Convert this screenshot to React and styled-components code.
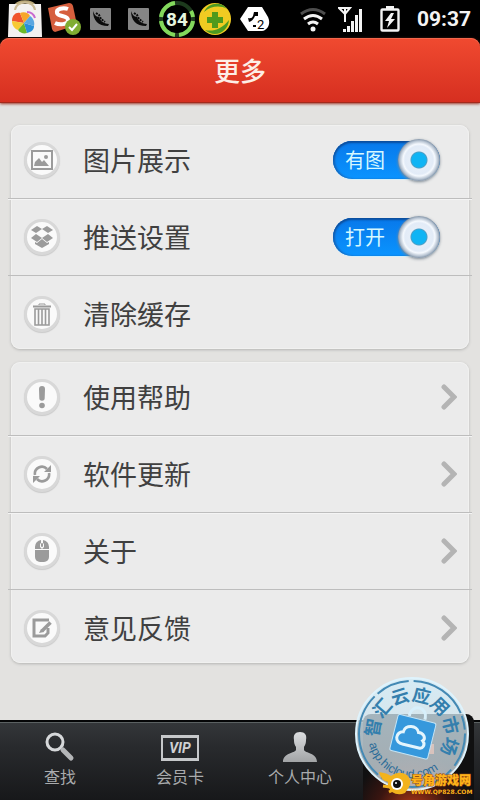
import styled, { createGlobalStyle, css } from "styled-components";
import React, { useState } from "react";

const GlobalStyle = createGlobalStyle`
  * {
    box-sizing: border-box;
  }

  body {
    margin: 0;
    background: #000;
    font-family: "Noto Sans CJK SC", sans-serif;
  }

  button {
    margin: 0;
    border: 0;
    background: none;
    font: inherit;
    color: inherit;
    cursor: pointer;
  }

  svg {
    display: block;
    flex: none;
  }
`;

const Page = styled.div`
  display: flex;
  flex-direction: column;
  min-height: 100vh;
  overflow: hidden;
  background: #e3e2e0;
`;

const Top = styled.div`
  background: #000;
`;

const StatusBar = styled.div`
  display: flex;
  justify-content: space-between;
  align-items: center;
  height: 38px;
  padding: 0 9px 0 7px;
`;

const StatusGroup = styled.div`
  display: flex;
  align-items: center;
  gap: ${(props) => props.$gap}px;
`;

const Clock = styled.time`
  font: 700 21px/24px Roboto, sans-serif;
  color: #f4f4f4;
`;

const Header = styled.header`
  display: flex;
  justify-content: center;
  align-items: center;
  height: 65px;
  border-bottom: 1px solid #a32a1c;
  border-radius: 9px 9px 0 0;
  background: linear-gradient(#f04a30, #d62f20);
  box-shadow: inset 0 1px #f2674c, 0 1px 3px #a0392c;
`;

const Title = styled.h1`
  margin: 0;
  font-size: 26px;
  font-weight: 500;
  line-height: 36px;
  color: #fdeee6;
`;

const Main = styled.main`
  flex: 1;
  display: flex;
  flex-direction: column;
  gap: 13px;
  padding: 22px 8px;
`;

const Card = styled.section`
  margin: 0 3px;
  border-radius: 9px;
  background: #ebebeb;
  box-shadow: inset 0 0 0 1px #f1f1f0, 0 1px 3px #b4b4b2;
`;

const rowStyles = css`
  display: flex;
  align-items: center;
  margin: 0 -3px;
  padding: 20px 15px 20px 16px;
  border-bottom: 1px solid #bdbdbd;
  text-align: left;

  &:not(:first-child) {
    box-shadow: inset 0 1px #f4f4f4;
  }

  &:first-child {
    padding-top: 17px;
  }

  &:last-child {
    border-bottom: 0;
    padding-bottom: 17px;
    box-shadow: none;
  }
`;

const Row = styled.div`
  ${rowStyles}
  padding-right: 32px;
`;

const RowButton = styled.button`
  ${rowStyles}
  width: calc(100% + 6px);

  && {
    border-bottom: 1px solid #bdbdbd;
  }

  &&:last-child {
    border-bottom: 0;
  }
`;

const IconCircle = styled.span`
  display: grid;
  place-items: center;
  flex: none;
  width: 36px;
  height: 36px;
  border: 3px solid #d8d8d8;
  border-radius: 50%;
  background: #fafafa;
  box-shadow: 0 1px 1px #c9c9c9;
`;

const RowText = styled.span`
  flex: 1;
  margin-left: 23px;
  font-size: 27px;
  line-height: 36px;
  color: #404040;
`;

const Toggle = styled.label`
  display: flex;
  justify-content: space-between;
  align-items: center;
  width: 107px;
  height: 38px;
  margin: -1px 0;
  padding-left: 12px;
  border-radius: 19px;
  background: linear-gradient(#0878ea, #0a94ff);
  box-shadow: inset 0 2px 2px #0b4d9c, inset 2px 0 2px #1668bd, 0 1px #d3effa;
  font-size: 20px;
  line-height: 28px;
  color: #d6f8ff;
  cursor: pointer;
`;

const Knob = styled.input`
  appearance: none;
  flex: none;
  width: 42px;
  height: 42px;
  margin: 0;
  border-radius: 50%;
  background: radial-gradient(
    circle,
    #10b4f4 7px,
    #4d9fc6 8px,
    #e6eef8 9px,
    #e2ebf7 14px,
    #f5f9fe 16px,
    #b9c5d3 19px,
    #8495a8 21px
  );
  box-shadow: 0 1px 3px #7d8994;
  cursor: pointer;
`;

const TabBar = styled.nav`
  position: relative;
  display: grid;
  grid-template-columns: repeat(4, 1fr);
  height: 80px;
  border-top: 2px solid #050607;
  background: linear-gradient(#34373a, #292b2e 30%, #17181a);
  box-shadow: inset 0 1px #5b6162;
`;

const Tab = styled.button`
  display: flex;
  flex-direction: column;
  align-items: center;
  gap: 2px;
  padding: 8px 0 0;
  font-size: 16px;
  line-height: 24px;
  color: #a9abad;
`;

const ActiveTab = styled(Tab)`
  margin: -8px 6px 0 3px;
  padding-top: 24px;
  border-radius: 8px 8px 0 0;
  background: radial-gradient(circle at 45% 115%, #c03c18, #3a1510 36px, #101011 60px);
`;

const Stamp = styled.svg`
  position: absolute;
  right: 10px;
  bottom: 8px;
`;

const SiteMark = styled.svg`
  position: absolute;
  right: 5px;
  bottom: 1px;
`;

const GREY = "#9b9b9b";

function ImageIcon() {
  return (
    <svg width="22" height="20" viewBox="0 0 22 20" fill={GREY}>
      <path d="M0 0h22v20H0zM2 2v16h18V2z" fillRule="evenodd" />
      <path d="M3 16l1-4 4-4 3 4 2-2 5 6z" />
      <circle cx="15" cy="7" r="2" />
    </svg>
  );
}

function BoxIcon() {
  return (
    <svg width="24" height="24" viewBox="0 0 24 24" fill={GREY}>
      <path d="M7 1l5 3-6 4-5-3zM17 1l-5 3 6 4 5-3z" />
      <path d="M6 9l6 4-5 4-6-4zM18 9l-6 4 5 4 6-4z" />
      <path d="M5 17l2 1 5-4 5 4 2-1v2l-7 4-7-4z" />
    </svg>
  );
}

function TrashIcon() {
  return (
    <svg width="18" height="23" viewBox="0 0 18 23" fill="none" stroke={GREY}>
      <path d="M0 3.500h18" strokeWidth="2" />
      <path d="M6 2V1h6v1" />
      <path d="M2 6h14v16H2zM5.500 6v16M9 6v16M12.500 6v16" strokeWidth="1.600" />
    </svg>
  );
}

function AlertIcon() {
  return (
    <svg width="8" height="24" viewBox="0 0 8 24" fill={GREY}>
      <path d="M1 4a3 3 0 0 1 6 0l-.3 9a2.600 2.600 0 0 1-5.400 0z" />
      <circle cx="4" cy="20.500" r="2.800" />
    </svg>
  );
}

function RefreshIcon() {
  return (
    <svg width="20" height="20" viewBox="0 0 20 20" fill="none" stroke={GREY} strokeWidth="2.600">
      <path d="M3 11A7 7 0 0 1 15 5M17 9A7 7 0 0 1 5 15" />
      <path d="M19 1v7h-7zM1 19v-7h7z" fill={GREY} stroke="none" />
    </svg>
  );
}

function MouseIcon() {
  return (
    <svg width="14" height="22" viewBox="0 0 14 22" fill={GREY}>
      <path d="M0 9V7a7 7 0 0 1 6-7v3a2 2 0 0 0-1 2v2l2 2zM14 9V7a7 7 0 0 0-6-7v3a2 2 0 0 1 1 2v2L7 9z" />
      <path d="M0 10h14v7a5 5 0 0 1-5 5H5a5 5 0 0 1-5-5z" />
      <rect x="6" y="3" width="2" height="4" rx="1" />
    </svg>
  );
}

function EditIcon() {
  return (
    <svg width="20" height="20" viewBox="0 0 20 20" fill="none" stroke={GREY}>
      <path d="M16 10v5l-3 3H2V2h15" strokeWidth="3" />
      <path d="M18.500 4.500L10 13" strokeWidth="3.600" />
      <path d="M7 15l2-4 3 3z" fill={GREY} stroke="none" />
    </svg>
  );
}

function Chevron() {
  return (
    <svg width="16" height="26" viewBox="0 0 16 26">
      <path
        d="M3 3l10 10L3 23"
        fill="none"
        stroke="#b4b4b4"
        strokeWidth="5"
        strokeLinecap="round"
      />
    </svg>
  );
}

function BagIcon() {
  return (
    <svg width="36" height="38" viewBox="0 0 36 38">
      <path d="M8 7c1-7 19-7 20 0" fill="none" stroke="#b9a878" strokeWidth="3" />
      <path d="M2 4h32l1 33H1z" fill="#f3f1f0" />
      <path d="M8 10c1-10 19-10 20 0" fill="none" stroke="#c9b993" strokeWidth="2" />
      <path d="M17 23L5 21c0-6 4-9 8-8z" fill="#f0542c" />
      <path d="M17 23l-4-10c4-2 9 0 10 3z" fill="#f7a62a" />
      <path d="M17 23L5 21c0 5 3 8 6 9z" fill="#f7c933" />
      <path d="M17 23l-6 7c2 3 6 4 9 3z" fill="#6cb928" />
      <path d="M17 23l3 10c4-1 7-3 7-7z" fill="#2a8fd8" />
      <path d="M17 23l10 3c1-4-1-8-4-10z" fill="#5aa6e0" />
      <path d="M20 12q6 0 8 6" fill="none" stroke="#c86ad0" strokeWidth="2" />
    </svg>
  );
}

function InputIcon() {
  return (
    <svg width="34" height="34" viewBox="0 0 34 34">
      <path d="M1 6L22 1q3 0 4 3l4 19-22 7q-2 0-3-3z" fill="#d65f3e" />
      <path
        d="M21 7c-5-2-12 0-11 4s11 2 11 7-9 5-13 3"
        fill="none"
        stroke="#fff"
        strokeWidth="4"
      />
      <circle cx="26" cy="25" r="8" fill="#80ad32" />
      <path d="M22 25l3 3 5-6" fill="none" stroke="#fff" strokeWidth="2" />
    </svg>
  );
}

function PodIcon() {
  return (
    <svg width="21" height="22" viewBox="0 0 21 22">
      <rect width="21" height="22" rx="1" fill="#858585" />
      <path d="M3 3c0 9 5 15 15 15l1-2c-6 0-9-4-10-7-3 0-5-3-6-6z" fill="#0b0b0b" />
      <path d="M6 5l3 2 2 4 4 3" fill="none" stroke="#0b0b0b" strokeWidth="2" strokeDasharray="2 1" />
    </svg>
  );
}

function GaugeIcon() {
  return (
    <svg width="38" height="38" viewBox="0 0 38 38">
      <circle cx="19" cy="19" r="16" fill="none" stroke="#1d3a1d" strokeWidth="4" />
      <path
        d="M35 21A16 16 0 0 1 21 35M17 35A16 16 0 0 1 3 21M3 17A16 16 0 0 1 17 3M33 11A16 16 0 0 1 35 17"
        fill="none"
        stroke="#83d85c"
        strokeWidth="4"
      />
      <text
        x="19"
        y="26"
        textAnchor="middle"
        fontFamily="Roboto, sans-serif"
        fontSize="19"
        fontWeight="700"
        fill="#e6f6df"
      >
        84
      </text>
    </svg>
  );
}

function ShieldIcon() {
  return (
    <svg width="32" height="34" viewBox="0 0 32 34">
      <circle cx="16" cy="17" r="16" fill="#f0cb22" />
      <path d="M5 10C9 0 23-1 28 7c-7-4-16-3-23 3zM6 28c8 2 17-1 24-10-1 12-14 19-24 10z" fill="#4c9a22" />
      <path d="M13 10h6v5h5v6h-5v5h-6v-5H8v-6h5z" fill="#4f9a1c" />
    </svg>
  );
}

function PlugIcon() {
  return (
    <svg width="30" height="26" viewBox="0 0 30 26">
      <path d="M0 13L8 1h14l6 10c3 6 0 13-6 14H8z" fill="#fff" />
      <path d="M8 12q4 1 5-2l1-4h4v4h-3q-2 5-6 6zM13 19h3v2h-3z" fill="#000" />
      <text x="17" y="23" fontFamily="Roboto, sans-serif" fontSize="13" fill="#000">
        2
      </text>
    </svg>
  );
}

function WifiIcon() {
  return (
    <svg width="26" height="26" viewBox="0 0 26 26" fill="none" stroke="#f4f4f4" strokeWidth="3">
      <path d="M1 8q12-9 24 0" stroke="#4d4d4d" />
      <path d="M4 13q9-7 18 0M8 18q5-4 10 0" />
      <circle cx="13" cy="23" r="2.500" fill="#f4f4f4" stroke="none" />
    </svg>
  );
}

function SignalIcon() {
  return (
    <svg width="25" height="26" viewBox="0 0 25 26">
      <path d="M1 2h11L7 8zM7 2v14" fill="none" stroke="#f4f4f4" strokeWidth="2" />
      <path d="M5 23h3v3H5zM9 20h3v6H9zM13 15h3v11h-3zM17 9h3v17h-3zM21 3h3v23h-3z" fill="#f4f4f4" />
    </svg>
  );
}

function BatteryIcon() {
  return (
    <svg width="20" height="26" viewBox="0 0 20 26">
      <path d="M6 0h8v3H6z" fill="#f4f4f4" />
      <rect x="1.500" y="3.500" width="17" height="21" rx="1" fill="none" stroke="#f4f4f4" strokeWidth="2.400" />
      <path d="M11 7l-6 8h4l-2 7 8-9h-4l3-6z" fill="#f4f4f4" />
    </svg>
  );
}

function SearchIcon() {
  return (
    <svg width="30" height="32" viewBox="0 0 30 32" fill="none">
      <circle cx="10" cy="12" r="8" stroke="#d6d8da" strokeWidth="3" />
      <path d="M18 20l8 8" stroke="#b4b6b8" strokeWidth="5" strokeLinecap="round" />
    </svg>
  );
}

function VipIcon() {
  return (
    <svg width="40" height="32" viewBox="0 0 40 32">
      <path d="M1 5h38v26H1zM3 8v20h34V8z" fill="#c6c8ca" fillRule="evenodd" />
      <text
        x="20"
        y="23"
        textAnchor="middle"
        fontFamily="Roboto, sans-serif"
        fontSize="14"
        fontStyle="italic"
        fontWeight="700"
        fill="#cfd1d3"
      >
        VIP
      </text>
    </svg>
  );
}

function PersonIcon() {
  return (
    <svg width="36" height="32" viewBox="0 0 36 32">
      <defs>
        <linearGradient id="person" x2="0" y2="1">
          <stop stopColor="#dcdee0" />
          <stop offset="1" stopColor="#a2a4a6" />
        </linearGradient>
      </defs>
      <path
        d="M18 2c5 0 7 3 6 8 0 4-1 5-2 7v3c1 3 13 3 13 12H1c0-9 12-9 13-12v-3c-1-2-2-3-2-7-1-5 1-8 6-8z"
        fill="url(#person)"
      />
    </svg>
  );
}

function MarketStamp() {
  return (
    <Stamp width="116" height="116" viewBox="-58 -58 116 116" role="img">
      <defs>
        <path id="stampTop" d="M-29 16A33 33 0 1 1 29 16" />
        <path id="stampBottom" d="M-44 0A44 44 0 0 0 44 0" />
        <linearGradient id="stampFill" x2="0" y2="1">
          <stop stopColor="#d2eefb" />
          <stop offset="1" stopColor="#d3dbe0" />
        </linearGradient>
      </defs>
      <circle r="56" fill="url(#stampFill)" fillOpacity="0.76" stroke="#dff3fc" strokeWidth="2" />
      <circle
        r="53"
        fill="none"
        stroke="#4389b4"
        strokeWidth="2"
        strokeDasharray="34 5 60 3 14 4 88 4"
      />
      <g transform="rotate(14)">
        <text fontSize="18" fontWeight="700" fill="#347fad" textAnchor="middle">
          <textPath href="#stampTop" startOffset="50%">
            智汇云应用市场
          </textPath>
        </text>
      </g>
      <g transform="rotate(20)">
        <text
          fontFamily="Liberation Sans, sans-serif"
          fontSize="12"
          fill="#2c6c98"
          textAnchor="middle"
        >
          <textPath href="#stampBottom" startOffset="50%">
            app.hicloud.com
          </textPath>
        </text>
      </g>
      <g transform="rotate(14)">
        <path d="M-7-17v-2a8 8 0 0 1 16 0v2" fill="none" stroke="#d7effb" strokeWidth="3" />
        <rect x="-18" y="-16" width="39" height="37" rx="2" fill="#3698dc" stroke="#c3e4f6" />
        <path
          d="M-7 12a6 6 0 0 1-2-12c0-8 12-10 15-3 5-1 9 4 6 7 4 3 2 8-2 8z"
          fill="none"
          stroke="#e4f5fd"
          strokeWidth="3"
        />
      </g>
    </Stamp>
  );
}

function GameMark() {
  return (
    <SiteMark width="96" height="32" viewBox="0 0 96 32" role="img">
      <path d="M0 5q8 1 12 4 8-6 16-1 5 5 2 12l-4 6q-7 3-13-1-5-5-4-10Q2 14 0 5z" fill="#f3b31c" />
      <path d="M4 19l7 1M10 25l4-2" stroke="#f3b31c" strokeWidth="3" />
      <circle cx="18" cy="17" r="6" fill="#fff" />
      <circle cx="18" cy="17" r="4" fill="#111" />
      <circle cx="17" cy="16" r="1" fill="#fff" />
      <text
        x="32"
        y="18"
        fontSize="12"
        fontWeight="900"
        fill="#ffb31a"
        stroke="#9a5212"
        strokeWidth="1"
        paintOrder="stroke"
      >
        号角游戏网
      </text>
      <text
        x="32"
        y="27"
        fontFamily="DejaVu Sans, sans-serif"
        fontSize="6"
        fontWeight="700"
        fill="#ffb31a"
      >
        WWW.QP828.COM
      </text>
    </SiteMark>
  );
}

function SettingToggle({ id, text }) {
  const [checked, setChecked] = useState(true);

  return (
    <Toggle htmlFor={id}>
      <span>{text}</span>
      <Knob
        id={id}
        type="checkbox"
        checked={checked}
        onChange={() => setChecked((value) => !value)}
      />
    </Toggle>
  );
}

const links = [
  { text: "使用帮助", icon: <AlertIcon /> },
  { text: "软件更新", icon: <RefreshIcon /> },
  { text: "关于", icon: <MouseIcon /> },
  { text: "意见反馈", icon: <EditIcon /> },
];

const tabs = [
  { text: "查找", icon: <SearchIcon /> },
  { text: "会员卡", icon: <VipIcon /> },
  { text: "个人中心", icon: <PersonIcon /> },
];

function App() {
  return (
    <Page>
      <GlobalStyle />
      <Top>
        <StatusBar>
          <StatusGroup $gap={9}>
            <StatusGroup $gap={4}>
              <BagIcon />
              <InputIcon />
            </StatusGroup>
            <StatusGroup $gap={17}>
              <PodIcon />
              <PodIcon />
            </StatusGroup>
            <StatusGroup $gap={3}>
              <GaugeIcon />
              <ShieldIcon />
            </StatusGroup>
            <PlugIcon />
          </StatusGroup>
          <StatusGroup $gap={12}>
            <WifiIcon />
            <StatusGroup $gap={17}>
              <SignalIcon />
              <BatteryIcon />
              <Clock>09:37</Clock>
            </StatusGroup>
          </StatusGroup>
        </StatusBar>
        <Header>
          <Title>更多</Title>
        </Header>
      </Top>

      <Main>
        <Card>
          <Row>
            <IconCircle>
              <ImageIcon />
            </IconCircle>
            <RowText>图片展示</RowText>
            <SettingToggle id="pictures" text="有图" />
          </Row>
          <Row>
            <IconCircle>
              <BoxIcon />
            </IconCircle>
            <RowText>推送设置</RowText>
            <SettingToggle id="push" text="打开" />
          </Row>
          <RowButton>
            <IconCircle>
              <TrashIcon />
            </IconCircle>
            <RowText>清除缓存</RowText>
          </RowButton>
        </Card>

        <Card>
          {links.map((link) => (
            <RowButton key={link.text}>
              <IconCircle>{link.icon}</IconCircle>
              <RowText>{link.text}</RowText>
              <Chevron />
            </RowButton>
          ))}
        </Card>
      </Main>

      <TabBar>
        {tabs.map((tab) => (
          <Tab key={tab.text}>
            {tab.icon}
            {tab.text}
          </Tab>
        ))}
        <ActiveTab aria-label="更多" aria-current="page">
          <svg width="30" height="30" viewBox="0 0 30 30">
            <path d="M20 6h10v10H20z" fill="#e9602f" />
          </svg>
        </ActiveTab>
        <MarketStamp />
        <GameMark />
      </TabBar>
    </Page>
  );
}

export default App;
